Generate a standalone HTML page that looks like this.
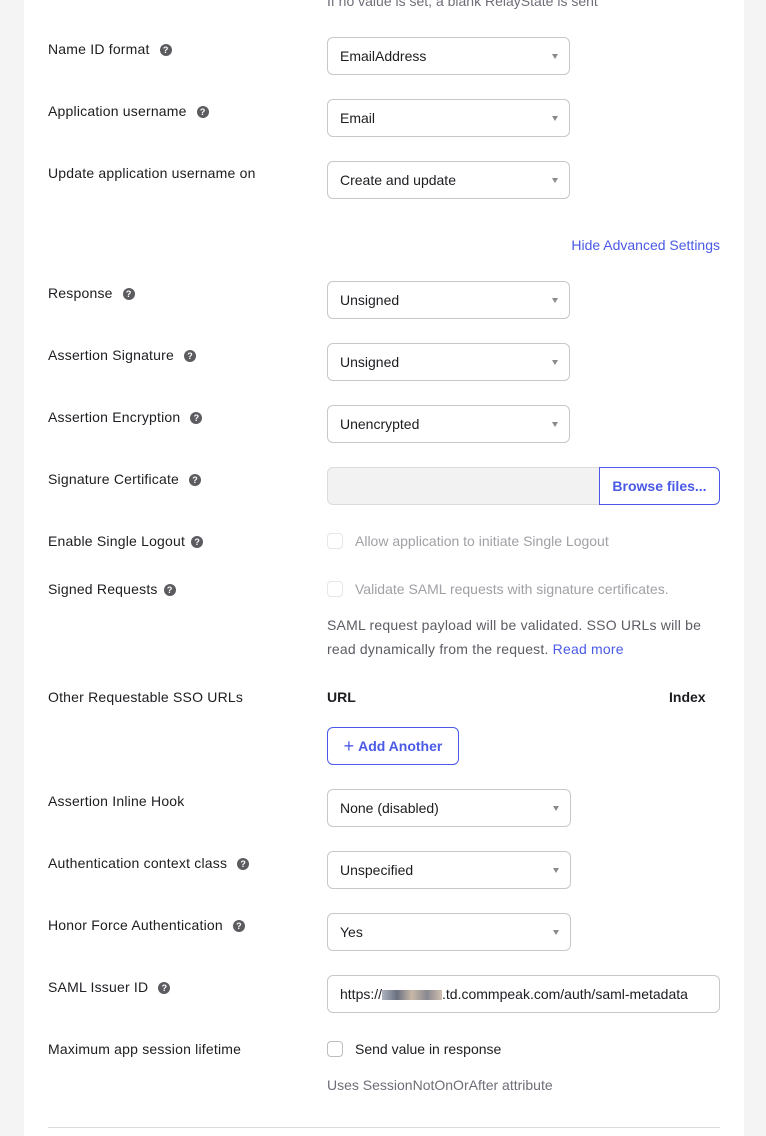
<!DOCTYPE html>
<html><head><meta charset="utf-8"><style>
body{margin:0;width:766px;height:1136px;background:#f4f4f4;font-family:"Liberation Sans",sans-serif;overflow:hidden;position:relative}
.panel{position:absolute;left:24px;top:0;width:720px;height:1136px;background:#fff}
.a{position:absolute;white-space:nowrap}
.lbl{font-size:14px;color:#1d1d21;left:48px;letter-spacing:0.2px}
.q{display:inline-block;width:12px;height:12px;border-radius:50%;background:#5c5c60;color:#fff;font-size:9px;font-weight:bold;text-align:center;line-height:12px;margin-left:10px;vertical-align:1px;letter-spacing:0}
.sel{position:absolute;left:327px;width:241px;height:36px;border:1px solid #c8c8cc;border-radius:6px;font-size:14px;color:#1d1d21;line-height:37px;box-sizing:content-box}
.sel .t{position:absolute;left:12px;top:0}
.sel i{position:absolute;right:11px;top:16px;width:0;height:0;border-left:3.5px solid transparent;border-right:3.5px solid transparent;border-top:5px solid #8a8a8e}
.blur{display:inline-block;width:60px;height:10px;background:linear-gradient(90deg,#b0b4c0,#6a7080,#c8b8a8,#8a8890,#d0c0b0);vertical-align:-1px}
.cb{position:absolute;left:327px;width:14px;height:14px;border:1px solid #d0d0d4;border-radius:4px}
.link{color:#4a5ae6}
</style></head><body>
<div class="panel"></div>
<div class="a" style="left:327px;top:-7px;font-size:14px;color:#6e6e78">If no value is set, a blank RelayState is sent</div>

<div class="a lbl" style="top:41px">Name ID format<span class="q">?</span></div>
<div class="sel" style="top:37px"><span class="t">EmailAddress</span><i></i></div>
<div class="a lbl" style="top:103px">Application username<span class="q">?</span></div>
<div class="sel" style="top:99px"><span class="t">Email</span><i></i></div>
<div class="a lbl" style="top:165px">Update application username on</div>
<div class="sel" style="top:161px"><span class="t">Create and update</span><i></i></div>

<div class="a link" style="right:46px;top:237px;font-size:14px">Hide Advanced Settings</div>

<div class="a lbl" style="top:285px">Response<span class="q">?</span></div>
<div class="sel" style="top:281px"><span class="t">Unsigned</span><i></i></div>
<div class="a lbl" style="top:347px">Assertion Signature<span class="q">?</span></div>
<div class="sel" style="top:343px"><span class="t">Unsigned</span><i></i></div>
<div class="a lbl" style="top:409px">Assertion Encryption<span class="q">?</span></div>
<div class="sel" style="top:405px"><span class="t">Unencrypted</span><i></i></div>
<div class="a lbl" style="top:471px">Signature Certificate<span class="q">?</span></div>
<div class="a" style="left:327px;top:467px;width:280px;height:36px;background:#f2f2f2;border:1px solid #dcdcdc;border-radius:6px 0 0 6px"></div>
<div class="a" style="left:599px;top:467px;width:119px;height:36px;border:1px solid #4a5ae6;border-radius:0 6px 6px 0;background:#fff;color:#4a5ae6;font-size:14px;font-weight:bold;line-height:37px;text-align:center">Browse files...</div>

<div class="a lbl" style="top:533px">Enable Single Logout<span class="q" style="margin-left:6px">?</span></div>
<div class="cb" style="top:533px;border-color:#e6e6e8"></div>
<div class="a" style="left:355px;top:533px;font-size:14px;color:#a0a0a6">Allow application to initiate Single Logout</div>
<div class="a lbl" style="top:581px">Signed Requests<span class="q" style="margin-left:6px">?</span></div>
<div class="cb" style="top:581px;border-color:#e6e6e8"></div>
<div class="a" style="left:355px;top:581px;font-size:14px;color:#a0a0a6">Validate SAML requests with signature certificates.</div>
<div class="a" style="left:327px;top:613px;font-size:14px;color:#5c5c64;line-height:24px;letter-spacing:0.2px">SAML request payload will be validated. SSO URLs will be<br>read dynamically from the request. <span class="link">Read more</span></div>

<div class="a lbl" style="top:689px">Other Requestable SSO URLs</div>
<div class="a" style="left:327px;top:689px;font-size:14px;font-weight:bold;color:#1d1d21">URL</div>
<div class="a" style="left:669px;top:689px;font-size:14px;font-weight:bold;color:#1d1d21">Index</div>
<div class="a" style="left:327px;top:727px;width:130px;height:36px;border:1px solid #4a5ae6;border-radius:6px;color:#4a5ae6;font-size:14px;font-weight:bold;line-height:37px;text-align:center"><span style="font-weight:normal;font-size:18px;vertical-align:-1px">+</span>&nbsp;Add Another</div>

<div class="a lbl" style="top:793px">Assertion Inline Hook</div>
<div class="sel" style="top:789px;width:242px"><span class="t">None (disabled)</span><i></i></div>
<div class="a lbl" style="top:855px">Authentication context class<span class="q">?</span></div>
<div class="sel" style="top:851px;width:242px"><span class="t">Unspecified</span><i></i></div>
<div class="a lbl" style="top:917px">Honor Force Authentication<span class="q">?</span></div>
<div class="sel" style="top:913px;width:242px"><span class="t">Yes</span><i></i></div>
<div class="a lbl" style="top:979px">SAML Issuer ID<span class="q">?</span></div>
<div class="sel" style="top:975px;width:391px;overflow:hidden"><span class="t">https://<span class="blur"></span>.td.commpeak.com/auth/saml-metadata</span></div>
<div class="a lbl" style="top:1041px">Maximum app session lifetime</div>
<div class="cb" style="top:1041px;border-color:#bdbdc2"></div>
<div class="a" style="left:355px;top:1041px;font-size:14px;color:#1d1d21">Send value in response</div>
<div class="a" style="left:327px;top:1077px;font-size:14px;color:#6e6e78">Uses SessionNotOnOrAfter attribute</div>
<div class="a" style="left:48px;top:1127px;width:672px;height:1px;background:#dcdcdc"></div>
</body></html>
